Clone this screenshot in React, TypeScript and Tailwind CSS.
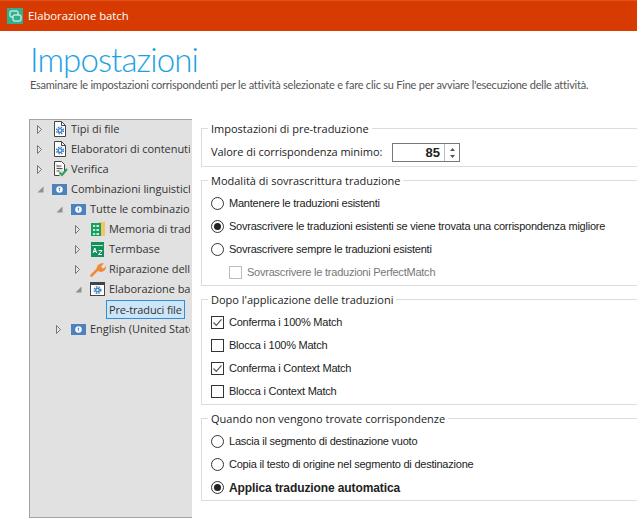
import React from "react";

const Gear = ({ cx = 8, cy = 9, r = 3.2, c = "#3f7fc4" }: { cx?: number; cy?: number; r?: number; c?: string }) => (
  <g>
    <circle cx={cx} cy={cy} r={r} fill={c} />
    <circle cx={cx} cy={cy} r={r + 0.8} fill="none" stroke={c} strokeWidth="1.4" strokeDasharray="1.5 1.2" />
    <circle cx={cx} cy={cy} r={r * 0.45} fill="#fff" />
  </g>
);

const DocGear = () => (
  <svg width="16" height="16" viewBox="0 0 16 16">
    <path d="M2.500.5h7l4 4v11h-11z" fill="#fff" stroke="#444" />
    <path d="M9.500.5v4h4" fill="none" stroke="#444" />
    <Gear cx={8} cy={9.500} r={2.6} />
  </svg>
);

const Verify = () => (
  <svg width="16" height="16" viewBox="0 0 16 16">
    <path d="M2.500.5h7l3 3v7M2.500.5v14h5" fill="#fff" stroke="#444" />
    <path d="M4.500 5h5M4.500 7.500h6M4.500 10h3" stroke="#555" />
    <path d="M7.500 11.500l2.500 2.500 5-6" fill="none" stroke="#2e9e5b" strokeWidth="2" />
  </svg>
);

const Globe = () => (
  <svg width="15" height="11" viewBox="0 0 15 11">
    <rect width="15" height="11" fill="#4d82bd" />
    <circle cx="7.500" cy="5.500" r="3.200" fill="#fff" />
    <path d="M6.500 3.500l2 .5-1 1.500 1 2-1.500-.7z" fill="#4d82bd" />
  </svg>
);

const Memory = () => (
  <svg width="16" height="16" viewBox="0 0 16 16">
    <rect x="9" y="1" width="6" height="14" fill="#f2c467" />
    <rect x="1" y="2" width="10" height="13" fill="#18a05f" />
    <path d="M3 5h6M3 9h6M3 13h6" stroke="#fff" strokeWidth="1.6" />
    <rect x="5.200" y="2" width="1.200" height="13" fill="#18a05f" />
  </svg>
);

const Termbase = () => (
  <svg width="16" height="16" viewBox="0 0 16 16">
    <rect x="1" y="1" width="13" height="15" fill="#14915a" />
    <rect x="2" y="4" width="11" height="1" fill="#bfe6d2" />
    <path d="M3 12l1.800-5 1.800 5M3.700 10.500h2.400" fill="none" stroke="#fff" strokeWidth="1" />
    <path d="M8.500 9.500h3.500l-3.500 4h3.500" fill="none" stroke="#fff" strokeWidth="1" />
  </svg>
);

const Wrench = () => (
  <svg width="16" height="16" viewBox="0 0 16 16">
    <path d="M1.500 14.500l6.500-6.500" stroke="#ed8b36" strokeWidth="2.600" strokeLinecap="round" />
    <path d="M7 9c-1.200-3.800 2.500-7.500 7-6.500l-2.800 2.800.8 1.700 1.700.4 2.300-2.300c.5 3.800-3 7-7 5.500z" fill="#ed8b36" />
  </svg>
);

const BatchIcon = () => (
  <svg width="15" height="14" viewBox="0 0 15 14">
    <rect x=".5" y=".5" width="14" height="13" fill="#fff" stroke="#444" />
    <rect x="0" y="0" width="15" height="3" fill="#444" />
    <Gear cx={7.500} cy={8} r={2.500} />
  </svg>
);

const Arrow = ({ open }: { open?: boolean }) =>
  open ? (
    <svg width="7" height="7" viewBox="0 0 7 7"><path d="M6.500.5v6h-6z" fill="#8f8f8f" /></svg>
  ) : (
    <svg width="5" height="9" viewBox="0 0 5 9"><path d="M.5.5l4 4-4 4z" fill="#e6e6e6" stroke="#777" /></svg>
  );

function TreeRow({ indent, open, icon, label, selected, noArrow }: { indent: string; open?: boolean; icon?: React.ReactNode; label: string; selected?: boolean; noArrow?: boolean }) {
  return (
    <div className={`flex h-5 items-center whitespace-nowrap ${indent}`}>
      {!noArrow && <span className="flex w-[15px] shrink-0 items-center justify-start"><Arrow open={open} /></span>}
      {icon && <span className="flex w-[19px] shrink-0 items-center">{icon}</span>}
      <span className={selected ? "h-[19px] border border-[#2f8fdc] bg-[#cde6f7] px-[2px] leading-[17px] tracking-[-0.15px]" : "tracking-[-0.05px]"}>{label}</span>
    </div>
  );
}

function Radio({ on, label, bold }: { on?: boolean; label: string; bold?: boolean }) {
  return (
    <div className="flex h-[23px] items-center gap-[5px]">
      <span className="flex h-[13px] w-[13px] shrink-0 items-center justify-center rounded-full border border-[#333] bg-white">
        {on && <span className="h-[7px] w-[7px] rounded-full bg-[#222]" />}
      </span>
      <span className={bold ? "text-[12px] font-bold tracking-[-0.1px]" : ""}>{label}</span>
    </div>
  );
}

function Check({ on, label, disabled }: { on?: boolean; label: string; disabled?: boolean }) {
  return (
    <div className={`flex h-[23px] items-center gap-[5px] ${disabled ? "text-[#777]" : ""}`}>
      <span className={`flex h-[13px] w-[13px] shrink-0 items-center justify-center border bg-white ${disabled ? "border-[#bcbcbc]" : "border-[#333]"}`}>
        {on && (
          <svg width="11" height="11" viewBox="0 0 11 11"><path d="M1.500 5.500l2.800 2.800 5.200-6" fill="none" stroke="#555" strokeWidth="1.200" /></svg>
        )}
      </span>
      <span>{label}</span>
    </div>
  );
}

function Group({ title, className, children }: { title: string; className: string; children: React.ReactNode }) {
  return (
    <fieldset className={`w-[450px] border border-[#dcdcdc] pl-[9px] ${className}`}>
      <legend className="-ml-[3px] px-[3px] font-['Open_Sans',sans-serif] text-[11px] leading-[15px] tracking-[0px] text-[#222]">{title}</legend>
      {children}
    </fieldset>
  );
}

export default function App() {
  return (
    <div className="h-[531px] w-[637px] overflow-hidden bg-white font-['Liberation_Sans',sans-serif] text-[#222]">
      <div className="flex h-[31px] items-center gap-[5px] border-t border-[#e2521f] bg-[#d83b01] pl-[7px] font-['Open_Sans',sans-serif] text-[11.300px] text-white">
        <svg width="16" height="16" viewBox="0 0 16 16">
          <rect width="16" height="16" fill="#2fb08c" />
          <rect x="3" y="3" width="8" height="6" rx="1" fill="#2fb08c" stroke="#fff" />
          <rect x="6" y="7" width="8" height="6" rx="1" fill="#2fb08c" stroke="#fff" />
        </svg>
        <span>Elaborazione batch</span>
      </div>

      <div className="pl-[30px] pt-[9px]">
        <h1 className="font-['Lato',sans-serif] text-[33px] leading-[38px] font-light tracking-[-0.9px] text-[#1ba1e2]">Impostazioni</h1>
        <p className="font-['Lato',sans-serif] text-[11px] leading-[14px] tracking-[-0.23px] text-[#555]">
          Esaminare le impostazioni corrispondenti per le attività selezionate e fare clic su Fine per avviare l'esecuzione delle attività.
        </p>
      </div>

      <div className="mt-[27px] flex pl-[29px]">
        <div className="h-[399px] w-[163px] shrink-0 overflow-hidden border-y border-l border-[#a3a3a3] bg-[#e1e1e1] font-['Open_Sans',sans-serif] text-[11px] text-[#333]">
          <div className="-mt-[1px] w-[160px] overflow-hidden">
            <TreeRow indent="pl-[7px]" icon={<DocGear />} label="Tipi di file" />
            <TreeRow indent="pl-[7px]" icon={<DocGear />} label="Elaboratori di contenuti" />
            <TreeRow indent="pl-[7px]" icon={<Verify />} label="Verifica" />
            <TreeRow indent="pl-[7px]" open icon={<Globe />} label="Combinazioni linguistiche" />
            <TreeRow indent="pl-[26px]" open icon={<Globe />} label="Tutte le combinazioni" />
            <TreeRow indent="pl-[45px]" icon={<Memory />} label="Memoria di traduzione" />
            <TreeRow indent="pl-[45px]" icon={<Termbase />} label="Termbase" />
            <TreeRow indent="pl-[45px]" icon={<Wrench />} label="Riparazione dell'allineamento" />
            <TreeRow indent="pl-[45px]" open icon={<BatchIcon />} label="Elaborazione batch" />
            <TreeRow indent="pl-[76px]" noArrow label="Pre-traduci file" selected />
            <TreeRow indent="pl-[26px]" icon={<Globe />} label="English (United States)" />
          </div>
        </div>

        <div className="ml-[9px] mt-[2px] flex flex-col whitespace-nowrap text-[11px] tracking-[-0.23px]">
          <Group title="Impostazioni di pre-traduzione" className="h-[46px]">
            <div className="flex items-center pt-[7px]">
              <span className="w-[181px] font-['Open_Sans',sans-serif] text-[11px] tracking-[-0.05px]">Valore di corrispondenza minimo:</span>
              <span className="flex h-[19px] w-[68px] items-center border border-[#777] bg-white">
                <span className="flex-1 pr-[4px] text-right text-[13px] font-bold tracking-normal">85</span>
                <span className="flex h-full w-[15px] flex-col items-center justify-center gap-[4px] border-l border-[#bbb]">
                  <svg width="5" height="3" viewBox="0 0 5 3"><path d="M2.500 0l2.500 3h-5z" fill="#555" /></svg>
                  <svg width="5" height="3" viewBox="0 0 5 3"><path d="M0 0h5l-2.500 3z" fill="#555" /></svg>
                </span>
              </span>
            </div>
          </Group>
          <Group title="Modalità di sovrascrittura traduzione" className="mt-[6px] h-[113px] pt-[4px]">
            <Radio label="Mantenere le traduzioni esistenti" />
            <Radio on label="Sovrascrivere le traduzioni esistenti se viene trovata una corrispondenza migliore" />
            <Radio label="Sovrascrivere sempre le traduzioni esistenti" />
            <div className="pl-[18px]">
              <Check disabled label="Sovrascrivere le traduzioni PerfectMatch" />
            </div>
          </Group>
          <Group title="Dopo l'applicazione delle traduzioni" className="mt-[6px] h-[113px] pt-[4px]">
            <Check on label="Conferma i 100% Match" />
            <Check label="Blocca i 100% Match" />
            <Check on label="Conferma i Context Match" />
            <Check label="Blocca i Context Match" />
          </Group>
          <Group title="Quando non vengono trovate corrispondenze" className="mt-[6px] h-[90px] pt-[4px]">
            <Radio label="Lascia il segmento di destinazione vuoto" />
            <Radio label="Copia il testo di origine nel segmento di destinazione" />
            <Radio on bold label="Applica traduzione automatica" />
          </Group>
        </div>
      </div>
    </div>
  );
}
